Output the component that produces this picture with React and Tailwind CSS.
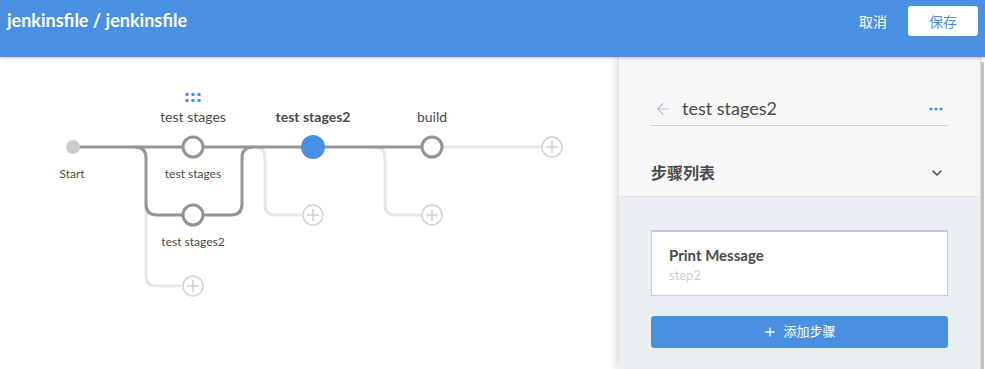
import { ArrowLeft, ChevronDown, Plus } from "lucide-react";

const DARK = "#949494";
const LIGHT = "#e6e6e6";

function AddNode({ x, y }) {
  return (
    <g>
      <circle cx={x} cy={y} r="10" fill="white" stroke="#d2d2d2" strokeWidth="1.5" />
      <path d={`M${x - 6} ${y}H${x + 6}M${x} ${y - 6}V${y + 6}`} stroke="#cfcfcf" strokeWidth="1.5" />
    </g>
  );
}

function Graph() {
  const label = { fontFamily: "Lato, 'Noto Sans', sans-serif", fill: "#4a4a4a" };
  return (
    <svg className="absolute left-0 top-0" width="619" height="312" viewBox="0 0 619 312">
      {/* light connectors */}
      <g fill="none" stroke={LIGHT} strokeWidth="3">
        <path d="M146 150 V219 Q146 229 156 229 H183" />
        <path d="M254 90 Q265 90 265 100 V148 Q265 158 275 158 H303" />
        <path d="M374 90 Q385 90 385 100 V148 Q385 158 395 158 H422" />
        <path d="M442 90 H542" />
      </g>
      {/* dark connectors */}
      <g fill="none" stroke={DARK} strokeWidth="3">
        <path d="M73 90 H432" />
        <path d="M135 90 Q146 90 146 101 V147 Q146 158 157 158 H231 Q242 158 242 147 V101 Q242 90 253 90" />
      </g>
      <circle cx="73" cy="90" r="7" fill="#cccccc" />
      <circle cx="193" cy="90" r="10" fill="white" stroke={DARK} strokeWidth="3" />
      <circle cx="193" cy="158" r="10" fill="white" stroke={DARK} strokeWidth="3" />
      <circle cx="313" cy="90" r="12" fill="#4a90e2" />
      <circle cx="432" cy="90" r="10" fill="white" stroke={DARK} strokeWidth="3" />
      <AddNode x={552} y={90} />
      <AddNode x={313} y={158} />
      <AddNode x={432} y={158} />
      <AddNode x={193} y={229} />
      {/* drag handle */}
      <g fill="#4a90e2">
        {[187, 193, 199].map((x) => (
          <g key={x}>
            <circle cx={x} cy="37.5" r="1.8" />
            <circle cx={x} cy="43.5" r="1.8" />
          </g>
        ))}
      </g>
      <text x="193" y="65" textAnchor="middle" fontSize="14" style={label}>test stages</text>
      <text x="313" y="65" textAnchor="middle" fontSize="14" fontWeight="700" style={label}>test stages2</text>
      <text x="432" y="65" textAnchor="middle" fontSize="14" style={label}>build</text>
      <text x="72" y="121" textAnchor="middle" fontSize="12" style={label}>Start</text>
      <text x="193" y="121" textAnchor="middle" fontSize="12" style={label}>test stages</text>
      <text x="193" y="189" textAnchor="middle" fontSize="12" style={label}>test stages2</text>
    </svg>
  );
}

export default function App() {
  return (
    <div className="w-[985px] h-[369px] overflow-hidden flex flex-col bg-white font-['Lato','Noto_Sans','Noto_Sans_CJK_SC',sans-serif]">
      <div className="h-[57px] shrink-0 bg-[#4a90e2] flex items-start justify-between pl-[7px] pr-[7px] shadow-[0_1px_3px_rgba(0,0,0,0.25)] relative z-10">
        <h1 className="mt-[7px] text-[18px] font-bold text-white">jenkinsfile / jenkinsfile</h1>
        <div className="flex items-center mt-[6px] gap-[21px]">
          <button className="text-[14px] text-white">取消</button>
          <button className="w-[70px] h-[30px] rounded-[3px] bg-white text-[14px] text-[#4a90e2]">保存</button>
        </div>
      </div>
      <div className="flex flex-1">
        <div className="relative flex-1">
          <Graph />
        </div>
        <div className="w-[362px] flex flex-col bg-[#f7f7f7] border-r border-[#dcdcdc] shadow-[-4px_0_6px_rgba(0,0,0,0.12)]">
          <div className="px-[32px] pt-[35px]">
            <div className="flex items-center h-[34px] border-b border-[#c9d4e0]">
              <ArrowLeft className="w-[18px] h-[18px] text-[#b4c3d3] ml-[3px]" strokeWidth={1.6} />
              <span className="ml-[10px] text-[18px] text-[#4a4a4a]">test stages2</span>
              <svg className="ml-auto mr-[5px]" width="14" height="4" viewBox="0 0 14 4">
                <circle cx="2" cy="2" r="1.6" fill="#4a90e2" />
                <circle cx="7" cy="2" r="1.6" fill="#4a90e2" />
                <circle cx="12" cy="2" r="1.6" fill="#4a90e2" />
              </svg>
            </div>
            <div className="flex items-center justify-between h-[70px] pt-[24px]">
              <span className="text-[16px] font-bold text-[#4a4a4a]">步骤列表</span>
              <ChevronDown className="w-[16px] h-[16px] text-[#4a4a4a] mr-[3px]" strokeWidth={2.2} />
            </div>
          </div>
          <div className="flex-1 bg-[#eceff2] border-t border-[#e0e3e6] px-[32px] pt-[33px]">
            <div className="bg-white border border-[#cccccc] border-t-2 border-t-[#c8c8c8] h-[66px] px-[17px] pt-[12px]">
              <div className="text-[15px] font-bold text-[#4a4a4a] leading-[22px]">Print Message</div>
              <div className="text-[13px] text-[#cfcfcf] leading-[18px]">step2</div>
            </div>
            <button className="mt-[20px] w-full h-[32px] rounded-[3px] bg-[#4a90e2] text-white text-[13px] flex items-center justify-center gap-[6px]">
              <Plus className="w-[14px] h-[14px]" strokeWidth={2.2} />
              添加步骤
            </button>
          </div>
        </div>
        <div className="w-[4px] bg-white pt-[5px]">
          <div className="w-[3px] h-full bg-[#c1c1c1]"></div>
        </div>
      </div>
    </div>
  );
}
